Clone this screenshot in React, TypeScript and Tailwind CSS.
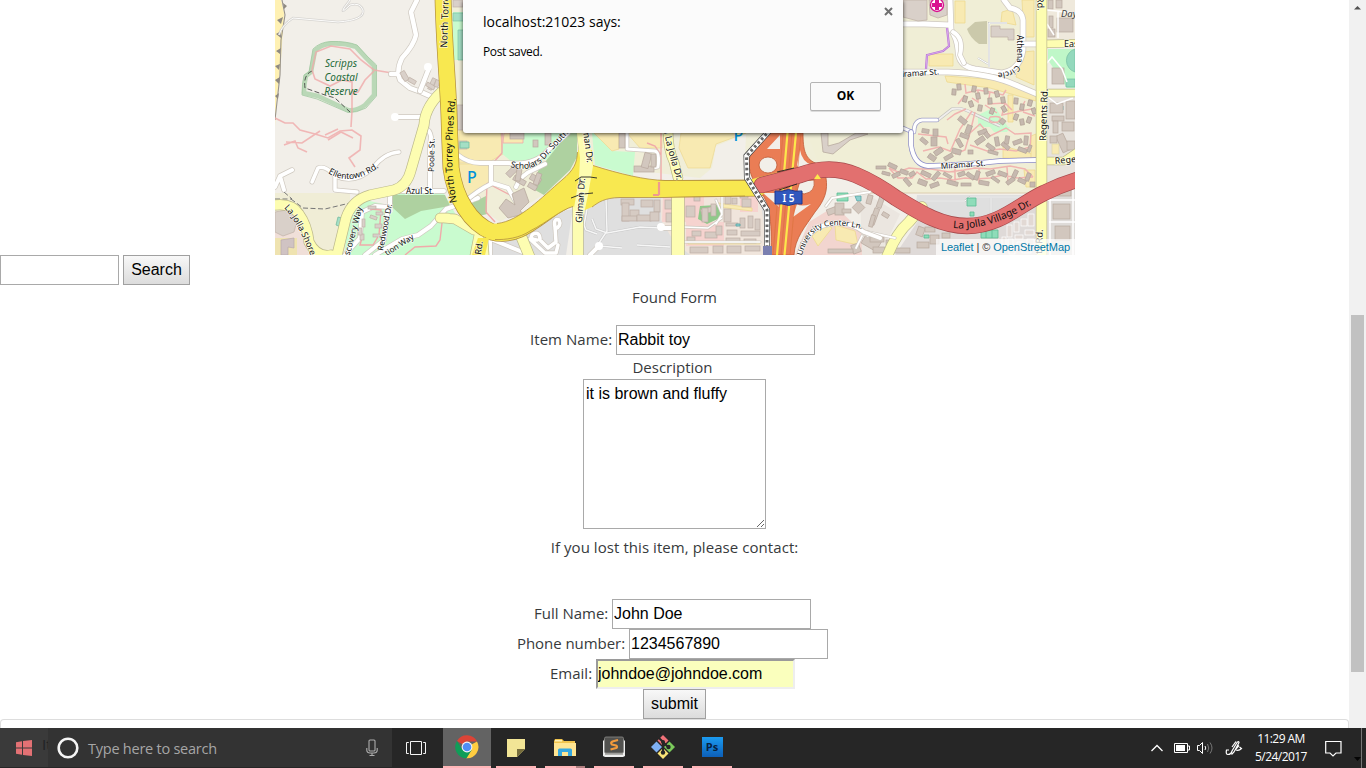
import React from "react";

type RoadProps = { d: string; w: number; fill?: string; edge?: string };

const Road = ({ d, w, fill = "#ffffff", edge = "#cfc9c0" }: RoadProps) => (
  <g fill="none" strokeLinecap="round" strokeLinejoin="round">
    <path d={d} stroke={edge} strokeWidth={w + 1.4} />
    <path d={d} stroke={fill} strokeWidth={w} />
  </g>
);

const PALE = "#fdfdb1";
const PALE_EDGE = "#bcb98d";

type Block = [number, number, number, number, number?];

const Blocks = ({ items, fill = "#d9d0c9", edge = "#c0b2a8" }: { items: Block[]; fill?: string; edge?: string }) => (
  <g fill={fill} stroke={edge} strokeWidth="0.7">
    {items.map(([x, y, w, h, r = 0], i) => (
      <rect key={i} x={x} y={y} width={w} height={h} transform={`rotate(${r} ${x + w / 2} ${y + h / 2})`} />
    ))}
  </g>
);

const housesNorth: Block[] = [
  [957, 84, 4, 6, -5], [952, 89, 4, 6, 5], [972, 86, 4, 6, 10], [984, 88, 4, 6, -5], [995, 91, 4, 6, -15],
  [963, 96, 4, 6, 15], [976, 93, 4, 6, -10], [988, 98, 4, 6, -5], [969, 101, 4, 6, -20], [978, 105, 4, 6, 10],
  [990, 108, 4, 6, 20], [1002, 106, 4, 6, -30], [1014, 98, 4, 6, 5], [1020, 104, 4, 6, 10], [1028, 100, 4, 6, 15],
  [1032, 108, 4, 6, -20], [1001, 97, 4, 6, -10], [1014, 114, 4, 6, 20], [1020, 119, 4, 6, -10], [1027, 117, 4, 6, 20],
  [1000, 119, 5, 5, 40],
];

const housesMid: Block[] = [
  [958, 118, 9, 5, 40], [966, 125, 5, 9, 20], [960, 134, 9, 4, 20], [955, 141, 9, 4, 60], [952, 149, 9, 5, 15],
  [944, 155, 9, 4, -30], [934, 149, 9, 5, -35], [928, 155, 8, 5, 35], [978, 130, 9, 4, -20], [975, 138, 10, 5, -35],
  [968, 150, 5, 4, 0], [986, 145, 9, 4, 35], [995, 137, 4, 9, -10], [1001, 144, 9, 4, 40], [1005, 136, 4, 8, 10],
  [1013, 140, 9, 4, -20], [1024, 136, 4, 9, 5], [1018, 148, 9, 4, 20], [988, 151, 10, 3, 15], [920, 139, 8, 4, 40],
  [931, 137, 6, 9, 0], [922, 129, 7, 4, 10], [933, 129, 5, 7, 0], [984, 133, 6, 4, 50], [1028, 145, 3, 7, 20],
];

const housesSouth: Block[] = [
  [876, 166, 10, 3], [888, 164, 9, 4, 25], [882, 172, 8, 3, 15], [892, 173, 8, 4, -25], [900, 170, 8, 4, 20],
  [903, 180, 9, 4, 50], [909, 172, 6, 4, -30], [918, 180, 9, 5, 20], [921, 172, 10, 4, 25], [934, 171, 4, 10, 40],
  [930, 183, 9, 4, -20], [943, 174, 9, 3, 30], [947, 181, 11, 4, 15], [958, 172, 7, 4, -20], [961, 183, 10, 3],
  [966, 174, 9, 4, 35], [975, 171, 4, 9, 20], [979, 181, 10, 4, 10], [986, 171, 9, 4, -20], [991, 178, 9, 3, 35],
  [998, 172, 9, 4, 20], [1006, 179, 9, 4, -35], [1013, 170, 4, 8, 25], [1018, 179, 8, 4, 25], [1026, 173, 4, 8, 20],
  [1030, 182, 5, 5],
];

const Label = ({ x, y, r = 0, size = 8.6, children }: { x: number; y: number; r?: number; size?: number; children: string }) => (
  <text x={x} y={y} transform={`rotate(${r} ${x} ${y})`} fontSize={size} fill="#111" stroke="#ffffff" strokeOpacity="0.65" strokeWidth="1.6" paintOrder="stroke">
    {children}
  </text>
);

const CurveLabel = ({ id, d, size = 8.6, halo = "#ffffff", length, children }: { id: string; d: string; size?: number; halo?: string; length?: number; children: string }) => (
  <>
    <path id={id} d={d} fill="none" />
    <text fontSize={size} fill="#111" stroke={halo} strokeOpacity="0.6" strokeWidth="1.4" paintOrder="stroke" textLength={length}>
      <textPath href={`#${id}`}>{children}</textPath>
    </text>
  </>
);

const StreetMap = () => (
  <svg width="800" height="255" viewBox="275 0 800 255" className="block" fontFamily='"Noto Sans", "Open Sans", sans-serif'>
    <rect x="275" y="0" width="800" height="255" fill="#f2efe9" />

    {/* land use */}
    <path d="M275 0H281L284 13L281 60L276 105L275 127Z" fill="#fff1b3" />
    <path d="M275 193H350V255H275Z" fill="#f0edd6" />
    <path d="M275 222H296L309 255H275Z" fill="#f0dfd8" />
    <path d="M450 0H465V133H870V170L700 178L590 165L500 222L455 190Z" fill="#f0eed8" />
    <path d="M275 238H297V255H275Z" fill="#efe3b0" />
    <path d="M453 12H464V60H453Z" fill="#c9fbcf" />
    <path d="M453 13H464V21H453ZM458 30H464V60H458Z" fill="#a4dfc5" stroke="#7cc4a5" strokeWidth="0.7" />
    <path d="M392 194L443 192L460 222L484 236L478 255H343L350 240L393 212Z" fill="#c9fbcf" />
    <path d="M348 203L365 200L388 205L385 240L360 252L345 252Z" fill="#c9fbcf" />
    <path d="M392 195H445L450 206L421 211L405 219L392 207Z" fill="#aed1a0" />
    <path d="M459 127H486L500 130L503 154L487 163H459Z" fill="#f8eab2" stroke="#eed990" strokeWidth="0.7" />
    <path d="M459 164H488L492 184L472 196L460 199L456 185Z" fill="#f8eab2" stroke="#eed990" strokeWidth="0.7" />
    <path d="M505 133H575L556 159L512 162L501 153Z" fill="#c9fbcf" />
    <path d="M504 133H523V143H503Z" fill="#f8eab2" stroke="#efa9a9" strokeWidth="0.8" />
    <path d="M568 133H577V157L570 170L551 188L544 195L535 190L538 171Z" fill="#aed1a0" />
    <path d="M466 206L486 196L487 214L476 217L466 208Z" fill="#aed1a0" />
    <path d="M592 133H600L611 151L635 152L633 176L595 165Z" fill="#c9fbcf" />
    <path d="M594 133H619V149L612 151Z" fill="#f8eab2" stroke="#eed990" strokeWidth="0.7" />
    <path d="M627 133H662V148H640Z" fill="#f8eab2" stroke="#eed990" strokeWidth="0.7" />
    <path d="M681 133H746L716 144L710 168H688L679 148Z" fill="#f8eab2" stroke="#eed990" strokeWidth="0.7" />
    <path d="M716 146L746 134L745 158L750 178H700L712 168Z" fill="#f2efe9" />
    <path d="M606 198H764V255H470L482 238L545 214L590 206Z" fill="#dfdfdf" />
    <path d="M573 208L579 208L576 255H566Z" fill="#f2efe9" />
    <path d="M661 197H760L765 232V255H690L673 240L661 220Z" fill="#f0e5dc" />
    <path d="M663 197H704V222H662ZM740 196H758V212H740ZM686 222H724V246H686Z" fill="#f6d3cf" />
    <path d="M700 206L717 205L722 217L707 224L698 219Z" fill="#8fc98a" />
    <path d="M807 133H903V0H1036V193H878L850 168L818 162Z" fill="#f0eed6" />
    <path d="M817 190L850 180L875 195L920 215L895 255H795Z" fill="#f2efe9" />
    <path d="M809 222L835 206L860 230L880 255H795Z" fill="#f2d5cf" />
    <path d="M860 190L900 214L880 255H862Z" fill="#ebe6e0" />
    <path d="M917 195H1036L990 225L950 224L915 211Z" fill="#dfdfdf" />
    <path d="M895 255L920 218L960 232L1005 225L1036 205V255Z" fill="#dfdad8" />
    <path d="M1047 0H1075V47H1047Z" fill="#efe9dc" />
    <path d="M1047 97H1075V178L1047 191Z" fill="#e7e2dc" />
    <path d="M1047 192L1075 184V255H1047Z" fill="#dedbd8" />
    <path d="M1048 49H1075V88H1067L1048 60Z" fill="#bff7c8" />
    <path d="M1075 49A12 12 0 0 0 1075 72ZM1066 79H1075V87H1066Z" fill="#94d9bd" stroke="#74bda0" strokeWidth="0.7" />
    <path d="M978 115L995 107L1008 127H978ZM990 127H1010L1007 132H994Z" fill="#c9fbcf" />

    {/* parking lots */}
    <g fill="#f8eab2" stroke="#eed990" strokeWidth="0.8">
      <path d="M955 1H965V23H955ZM929 54H953V66H929ZM1022 0H1034V37H1024ZM1023 52L1034 51V85L1016 77Z" />
      <path d="M945 76L1000 80L1036 96V101L990 88L947 82ZM1002 12L1012 9L1016 25L1001 22Z" />
      <path d="M1008 95H1013V122H1008ZM1003 146L1032 154L1036 158H1003ZM1024 170H1035V187H1026Z" />
      <path d="M1031 146V136L1036 134V158H1031ZM812 236L826 224L832 228L818 246ZM835 225L855 231L858 245L836 240Z" />
      <path d="M718 203L752 208V211L718 207ZM688 242H760V244H688Z" />
    </g>

    {/* coastline cliff */}
    <path d="M282 0L285 15L281 40L280 75L275 120" fill="none" stroke="#999389" strokeWidth="1.1" />
    <g fill="#8f8a82">
      <path d="M283 3L287 6L284 9ZM283 17L277 20L281 24ZM281 31L276 34L281 38ZM281 48L276 51L280 54ZM280 64L275 66L279 70ZM280 77L275 80L279 84ZM279 93L275 96L278 99Z" />
    </g>

    {/* reserve */}
    <path d="M311 72L315 51Q320 45 331 43.500Q345 43 356 47L366 58L374 66L374 95L365 105Q357 111 348 110L318 96L304 93Q304 84 306 76Z" fill="none" stroke="#b4d5b1" strokeWidth="4.500" strokeLinejoin="round" opacity="0.9" />
    <path d="M309 72L313 49Q320 42 331 41.500Q346 41 357 45L368 57L376.500 65L376.500 96L366 108Q356 113 348 112.500L317 99L302 95Q302 84 304 75Z" fill="none" stroke="#a0c8a0" strokeWidth="0.8" />
    <path d="M312 71Q303 75 305 88L325 95L335 98L350 112" fill="none" stroke="#333" strokeWidth="0.8" strokeDasharray="5 2.5" />
    <g fill="none" stroke="#f0aaaa" strokeWidth="1.6" opacity="0.8">
      <path d="M312 70L316 52L331 46L350 49L361 60L374 70L392 73M312 70L315 79L330 86L342 80L352 82V111L351 127" />
      <path d="M374 71L365 80L358 92L352 94M275 118L285 123H293L300 130L315 134L328 138L340 131L352 130L361 136L360 150L349 158L355 167" />
      <path d="M284 145L295 141L298 148L307 152M286 142L302 143L320 131M325 135L338 129M328 140L341 132L353 138" />
    </g>
    <g fill="none" stroke="#fff" strokeWidth="1" opacity="0.9">
      <path d="M279 35Q282 25 293 18L338 22Q365 20 363 10Q360 2 350 5Q340 15 344 8L350 0" stroke="#d4d2cf" strokeWidth="2.4" />
      <path d="M279 35Q282 25 293 18L338 22Q365 20 363 10Q360 2 350 5Q340 15 344 8L350 0" />
    </g>

    {/* left streets */}
    <Road d="M417 0L411 12L416 35Q414 45 402 58Q396 70 400 80L410 88L421 92L430 96M398 74H391" w={4.5} />
    <Road d="M420 91L429 68" w={4.5} />
    <circle cx="428" cy="67" r="4" fill="#fff" />
    <Road d="M395 117H420" w={4} />
    <circle cx="395" cy="117" r="4" fill="#fff" />
    <Road d="M312 182L318 168Q325 165 335 176Q355 185 373 168Q384 153 399 152M335 177V190L357 192" w={3.5} />
    <Road d="M275 187L280 176L292 170M280 176L284 190" w={4} />
    <Road d="M398 191H444M430 190V145L431 137Q430 130 425 128M390 193V206" w={4} />
    <path d="M275 199H292L284 192M291 199L303 208L325 209L350 203" fill="none" stroke="#777" strokeWidth="1" strokeDasharray="5 2.5" />
    <Road d="M345 255L360 238L362 212L375 206L388 207L384 240L365 255M375 255L402 239L418 235L431 226L446 209L478 198" w={4} />
    <path d="M370 209L381 210L379 235L373 245H360L362 238M442 223L440 240L436 246L415 247L405 255" fill="none" stroke="#f0aaaa" strokeWidth="1.4" />
    <Blocks items={[[368, 206, 8, 3], [376, 212, 7, 3], [375, 224, 7, 4], [373, 234, 7, 3], [362, 219, 3, 8], [360, 234, 4, 6], [370, 216, 7, 3, 20], [358, 228, 4, 7], [402, 71, 5, 10, -30], [408, 79, 8, 4, 30], [430, 78, 4, 12, 25], [426, 84, 9, 4, 30], [435, 80, 4, 7, 20], [453, 0, 10, 7], [457, 105, 7, 25], [459, 141, 8, 8]]} />
    <path d="M275 212L286 210L298 217L294 232L283 236L275 232Z" fill="#d9d0c9" stroke="#c0b2a8" strokeWidth="0.7" />
    <path d="M281 240L294 238L294 248L288 247V255H281Z" fill="#d0c3c3" stroke="#b9a9ad" strokeWidth="0.7" />
    <path d="M460 142H469V148H460ZM338 217L342 218L341 227L336 225Z" fill="#a4dfc5" stroke="#74bda0" strokeWidth="0.8" />
    <Road d="M275 205Q292 203 299 214Q307 225 309 242Q317 258 331 255M337 255L346 218Q352 200 370 195L394 190Q407 186 411 170L424 125Q425 105 446 88" w={9.5} fill={PALE} edge={PALE_EDGE} />

    {/* campus streets */}
    <g fill="none" stroke="#f0aaaa" strokeWidth="1.4">
      <path d="M502 133V153L492 164M487 183L486 212L495 222M487 183L510 195" />
      <path d="M661 133V180L657 194L651 195M647 143L655 146L661 155" />
    </g>
    <Road d="M458 155Q468 163 480 163H508Q535 166 548 150L568 133M491 165V184Q478 190 462 204M492 183L508 188L516 202M516 187Q520 175 535 169L545 164" w={4} />
    <Road d="M627 133V149L655 151Q660 153 658 167L648 169" w={3} />
    <Blocks items={[[506, 168, 13, 6, -45], [513, 178, 13, 5, 30], [516, 169, 5, 12, 10], [530, 176, 11, 6, 30], [535, 173, 5, 12, 20], [528, 184, 9, 5, 30], [545, 133, 6, 12], [533, 140, 5, 7], [510, 133, 14, 6], [619, 133, 6, 15], [634, 166, 20, 6], [643, 153, 7, 15, 15], [651, 154, 5, 13]]} fill="#d2c7be" edge="#b8a99e" />
    <path d="M512 194L524 188L529 202L520 211L524 214L508 218L499 208L506 199L515 205Z" fill="#d2c7be" stroke="#b8a99e" strokeWidth="0.8" />
    <g fill="none" stroke="#c8c8c8" strokeWidth="2.6">
      <path d="M592 219L596 229L607 233L640 227L660 228M606 199L607 231L599 243M637 245L670 247M587 209L584 225L586 230L597 234M599 246L622 248" />
    </g>
    <g fill="none" stroke="#f6f6f6" strokeWidth="1.5">
      <path d="M592 219L596 229L607 233L640 227L660 228M606 199L607 231L599 243M637 245L670 247M587 209L584 225L586 230L597 234M599 246L622 248" />
    </g>
    <Road d="M537 240Q528 239 533 234Q540 231 540 240L548 248L556 242L555 227Q553 218 559 220Q562 226 555 229M530 239L545 253H556L558 245" w={3.5} />
    <Road d="M490 239L490 255M493 240L530 255M599 246L590 255M660 228H680" w={4} />
    <circle cx="599" cy="246" r="4" fill="#fff" />
    <circle cx="661" cy="227" r="4" fill="#fff" />
    <Blocks items={[[621, 199, 13, 6], [622, 203, 7, 18], [630, 210, 9, 7], [622, 216, 15, 5], [641, 200, 12, 7], [654, 200, 6, 12], [637, 215, 14, 6], [650, 212, 9, 9], [665, 200, 7, 9], [666, 213, 6, 9], [686, 206, 9, 11], [694, 195, 6, 6], [701, 208, 12, 5, -15], [702, 208, 6, 14], [711, 204, 5, 12], [724, 209, 7, 13], [725, 195, 6, 9], [732, 198, 5, 6], [742, 199, 9, 8], [740, 194, 8, 4], [726, 223, 12, 3], [727, 230, 10, 5], [740, 218, 5, 10], [748, 216, 5, 12], [755, 219, 5, 11], [741, 231, 19, 5], [726, 238, 14, 4], [744, 239, 12, 4], [705, 232, 12, 6], [716, 226, 6, 9], [692, 231, 9, 5], [687, 237, 8, 4], [690, 247, 18, 6], [713, 246, 10, 7], [727, 246, 14, 7], [745, 246, 15, 5]]} fill="#d6cbc3" edge="#bcada3" />
    <Road d="M684 227L708 228L722 218M684 242H760M716 200L722 214L716 224M722 196V215" w={1.5} />

    {/* right-hand residential */}
    <Road d="M903 24H925L950 25M950 0L951 30Q957 38 958 50Q958 66 975 69L1002 73Q1020 70 1023 50V20Q1022 10 1010 8L1004 0" w={5} />
    <Road d="M953 32Q964 38 960 55L964 63" w={4} />
    <Road d="M903 72H948Q990 73 1018 86L1037 94M1020 44H1037" w={5} />
    <path d="M947 28L949 46L943 51L927 55L926 69" fill="none" stroke="#b873d8" strokeWidth="2.2" />
    <path d="M947 28L949 46L943 51L927 55L926 69" fill="none" stroke="#e0b4ef" strokeWidth="0.8" />
    <path d="M967 29L975 22L987 21V44H979Q970 38 967 29Z" fill="#cbc9ab" />
    <path d="M989 67V23H1007M978 58L988 64" fill="none" stroke="#c8c8c8" strokeWidth="2" />
    <path d="M989 67V23H1007M978 58L988 64" fill="none" stroke="#fff" strokeWidth="1" />
    <path d="M991 26H1000V29H1014V40H1008V37H991Z" fill="#d9d0c9" stroke="#c0b2a8" strokeWidth="0.8" />
    <path d="M903 0H927V20L918 21L903 17ZM929 0H947V15L938 18L930 15Z" fill="#d9d0c9" stroke="#c0b2a8" strokeWidth="0.8" />
    <path d="M914 132Q914 121 922 120H938L952 109Q962 107 972 113L1000 126" fill="none" stroke="#c4c2be" strokeWidth="3.200" />
    <path d="M914 132Q914 121 922 120H938L952 109Q962 107 972 113L1000 126" fill="none" stroke="#f0eeec" strokeWidth="1.800" />
    <g fill="none" stroke="#f0b4b0" strokeWidth="1.500">
      <path d="M965 84L966 93L978 90L990 92L1003 95L1006 90M958 104L965 95M978 90V102L972 98M990 92L988 104L1005 103L1012 110M985 105L997 113M1005 103L1002 115L1020 111L1032 109M1020 111L1025 101M1035 116L1023 112M990 117Q1005 115 998 122Q987 124 990 117M966 109L955 114L947 120" />
      <path d="M975 112L970 133L965 150L955 154M970 133L980 124L990 136L1006 128L1015 134L1031 133L1030 147L1016 151L1000 149L987 151L970 145M950 152L960 129L972 111M923 151L939 147L950 151M918 134L946 137L948 144" />
      <path d="M889 168L898 172L909 168L920 169M889 168L898 178L912 178L917 172L926 179L940 178L953 180L965 178L976 179L990 178L1003 175L1017 178L1033 177M920 169L931 169L949 172L964 170L975 168L990 169L1010 166L1025 169L1033 177M955 167V185M979 169V183M1007 167L1008 182" />
    </g>
    <Blocks items={housesNorth} fill="#c6b9af" edge="#ad9d92" />
    <Blocks items={housesMid} fill="#c6b9af" edge="#b3a399" />
    <Blocks items={housesSouth} fill="#c6b9af" edge="#b3a399" />
    <path d="M821 133L823 152L833 154L850 140L868 134L856 133L839 143L828 146V133Z" fill="#d9d0c9" stroke="#b8a99e" strokeWidth="0.8" />
    <Road d="M914 132Q914 121 922 120H937M903 128L912 132" w={3} edge="#9f9fc7" />
    <Road d="M911 132V145Q914 165 928 166Q965 165 1000 161L1036 160" w={4} edge="#8c8cc8" />
    <path d="M870 193H1036" stroke="#d9c8a9" strokeWidth="0.9" />
    <path d="M921 201L965 201L970 197H1032M991 198V215" fill="none" stroke="#c8c8c8" strokeWidth="2.2" />
    <path d="M921 201L965 201L970 197H1032M991 198V215" fill="none" stroke="#fff" strokeWidth="1" />
    <path d="M967 198H976V206H967ZM981 230H998V238H981ZM986 230V238M992 230V238M970 212H974V216H970ZM924 235H929V238H924ZM837 193H848V201H837Z" fill="#8edcb9" stroke="#5aba92" strokeWidth="0.8" />
    <path d="M855 196H861V201H857ZM736 224H740V226H736ZM1058 206H1064V208H1058ZM1058 230H1064V232H1058ZM1060 106H1063V110H1060Z" fill="#90d0cf" stroke="#55a5a4" strokeWidth="0.8" />

    {/* lower right buildings */}
    <Blocks items={[[827, 208, 10, 6, -20], [835, 203, 9, 12], [842, 209, 9, 4], [854, 203, 9, 9, 45], [867, 195, 5, 9, 15], [872, 208, 5, 17, 20], [878, 196, 5, 12, 20], [852, 244, 8, 9, -20], [863, 236, 17, 12, 30], [828, 249, 25, 4], [870, 215, 4, 12, 15], [882, 213, 7, 4, 30], [870, 237, 14, 5], [886, 240, 10, 6], [873, 247, 12, 6], [892, 248, 18, 5], [917, 227, 7, 9, 20], [925, 227, 10, 5], [930, 235, 9, 9], [917, 242, 12, 6], [942, 233, 8, 5]]} fill="#d2c7be" edge="#b8a99e" />
    <Blocks items={[[1007, 225, 5, 12], [1014, 222, 5, 10], [1021, 219, 6, 7], [1028, 214, 6, 12], [1008, 239, 5, 8], [1015, 235, 8, 4], [1025, 230, 9, 5], [1017, 242, 6, 6], [1027, 239, 7, 6], [1002, 237, 4, 10], [1009, 250, 6, 4], [1022, 249, 9, 4]]} fill="#e2d9d4" edge="#ffffff" />
    <Blocks items={[[1048, 0, 5, 9], [1056, 0, 6, 8], [1049, 16, 4, 12], [1057, 18, 16, 14], [1048, 29, 7, 8], [1052, 68, 12, 16], [1050, 103, 13, 10], [1066, 101, 9, 18], [1052, 116, 12, 5], [1053, 121, 5, 12], [1062, 122, 12, 9], [1059, 134, 8, 18, -25], [1050, 136, 7, 7], [1067, 141, 8, 9], [1053, 204, 17, 15], [1055, 226, 15, 14], [1051, 188, 20, 8]]} fill="#d2c7be" edge="#b8a99e" />
    <Blocks items={[[1052, 144, 7, 10]]} fill="#f8eab2" edge="#dcd7a8" />
    <path d="M1047 63L1052 57L1062 69L1067 82M1047 24L1054 35M1047 200H1075M1049 222H1075M1048 97L1057 104L1073 98M1073 184V255M1050 185V255M1058 11V38M1047 10L1075 13" fill="none" stroke="#fff" strokeWidth="1.5" />

    {/* minor yellow roads */}
    <Road d="M582 130L586 165M584 178L578 206V257M482 232L484 260M519 231L530 258" w={10} fill={PALE} edge={PALE_EDGE} />
    <Road d="M480 230L474 260M444 218L455 219L474 230M440 218H448M668 130Q668 150 674 162L678 178" w={9} fill={PALE} edge={PALE_EDGE} />
    <Road d="M678 194V260" w={12} fill={PALE} edge={PALE_EDGE} />
    <Road d="M885 262Q895 234 909 222L922 207" w={10} fill={PALE} edge={PALE_EDGE} />
    <Road d="M1041 44L1080 43M1041 93H1080M1041 161L1064 161L1080 150" w={7} fill={PALE} edge={PALE_EDGE} />
    <Road d="M1041.500 -5V262" w={10} fill={PALE} edge={PALE_EDGE} />

    {/* North Torrey Pines / La Jolla Village */}
    <Road d="M443 -5C444 50 449 90 449.500 132L451 168C455 198 470 223 492 232C515 238 532 222 552 208C565 200 576 193 592 189L760 188" w={15.500} fill="#f8e850" edge="#b3903d" />
    <path d="M478 238L472 255H485L489 238Z" fill="#f8e850" />
    <path d="M497 223.500C520 221 542 197 562 180C574 170 577 163 577.500 152L583 160L593 165.500C620 174 645 180 665 180.500H757L762 195L665 197H620C604 198 599 202 592 207L578 213L573 206C560 211 548 222 530 231C520 238 505 240 495 239.500L480 233L490 224Z" fill="#f8e850" />
    <path d="M497 223.500C520 221 542 197 562 180C574 170 577 163 577.500 152M593 165.500C620 174 645 180 665 180.500H745M592 207C599 202 604 198 620 197.500H665L745 196M573 206.500C560 210 548 222 530 231C520 238 505 240 495 239.500" fill="none" stroke="#b3903d" strokeWidth="0.8" />
    <path d="M578 150L592 150L593 166L590 178H581L577 181L579 168Z" fill="#f8e850" />
    <path d="M577 133H588L593 166L591 178L588 195L584 214H573L579 178L580 158Z" fill={PALE} />
    <path d="M575 181L581 177H590L597 178M571 198L579 195L583 194L593 193M580 178L579 186" fill="none" stroke="#222" strokeWidth="0.9" />
    <path d="M659 182V195M653 195H659" stroke="#ef9a8f" strokeWidth="2.2" fill="none" />

    {/* interstate and ramps */}
    <path d="M769 133C760 142 751 150 749 160C748 170 753 180 758 190C770 200 772 220 771 255H794C795 238 805 227 815 212C825 200 828 190 826 178L818 164C805 160 803 150 803 133Z" fill="#ea7d55" stroke="#c05a35" strokeWidth="0.8" />
    <path d="M780 135V149L767 149ZM793 217L811 204Q801 207 797 204Z" fill="#f2efe9" />
    <path d="M800 150Q802 162 812 165L799 169L797 165Z" fill="#f2efe9" />
    <ellipse cx="768" cy="165" rx="9" ry="8" fill="#f2efe9" stroke="#c05a35" strokeWidth="0.8" />
    <path d="M800 181L814 180Q816 192 804 194L797 191Z" fill="#f2efe9" stroke="#c05a35" strokeWidth="0.8" />
    <path d="M763 193L775 193L779 207Z" fill="#f2efe9" />
    <path d="M787.500 133L777 255M796 133L784.500 255" stroke="#fce84b" strokeWidth="2.2" />
    <path d="M783 133L773 255M792 133L781 255M801 133L790 255" stroke="#d97039" strokeWidth="0.6" />
    <path d="M749 180L778 172L790 176L762 195H750Z" fill="#f8e850" />
    <Road d="M762 185L800 175Q830 164 856 175Q875 183 896 198C922 214 942 226 967 226C1000 226 1020 204 1044 193Q1062 184 1080 179" w={15} fill="#e2706f" edge="#a84a4c" />
    <path d="M777 172L794 168M779 190L797 184" stroke="#222" strokeWidth="0.9" />
    <path d="M814 179L817.500 174L821 179Z" fill="#fce84b" />
    <path d="M770 130L746.500 156L747 178L767 210V247" fill="none" stroke="#444" strokeWidth="6" />
    <path d="M770 130L746.500 156L747 178L767 210V247" fill="none" stroke="#fff" strokeWidth="4.6" />
    <path d="M770 130L746.500 156L747 178L767 210V247" fill="none" stroke="#666" strokeWidth="3" strokeDasharray="2.6 2.6" />
    <rect x="763" y="246" width="9" height="9" fill="#7a7fb0" />
    <path d="M775 191Q782 192 788.500 189.500Q795 192 802 191V204Q795 203 788.500 205.500Q782 203 775 204Z" fill="#3158bd" stroke="#1b3690" strokeWidth="1" />
    <text x="788.500" y="201.500" textAnchor="middle" fontSize="10" fontWeight="600" fill="#fff">I 5</text>

    <Road d="M826 206L832 198L870 192M858 228L868 236M868 232L895 238M862 236L856 248" w={1.8} />
    <Road d="M797 262Q804 232 822 226Q845 218 864 232L880 238" w={4} />

    {/* labels */}
    <g fontStyle="italic" fill="#1f6b3a" fontSize="10" textAnchor="middle">
      <text x="341" y="67">Scripps</text>
      <text x="341" y="81">Coastal</text>
      <text x="341" y="94.500">Reserve</text>
    </g>
    <Label x={447} y={48} r={-88} size={9.5}>North Torrey Pines Rd.</Label>
    <CurveLabel id="torrey" d="M457 202Q447 160 458 80" size={9.9} halo="#f8e850">North Torrey Pines Rd.</CurveLabel>
    <Label x={434} y={172} r={-89} size={8.2}>Poole St.</Label>
    <Label x={406} y={194} size={8.2}>Azul St.</Label>
    <CurveLabel id="ellentown" d="M328 173Q352 189 385 163" size={8.6}>Ellentown Rd.</CurveLabel>
    <CurveLabel id="shores" d="M284 208Q298 222 313 262" size={8.8}>La Jolla Shores Dr.</CurveLabel>
    <Label x={349} y={258} r={-75} size={8.6}>iscovery Way</Label>
    <Label x={383} y={251} r={-79} size={8}>Redwood Dr.</Label>
    <Label x={387} y={256} r={-33} size={8}>tion Way</Label>
    <CurveLabel id="scholars" d="M510 167Q534 174 548 155L572 129" size={8.6}>Scholars Dr. South</CurveLabel>
    <Label x={583} y={130} r={83} size={9.2}>man Dr.</Label>
    <Label x={582} y={223} r={-86} size={9.2}>Gilman Dr.</Label>
    <CurveLabel id="lajolla" d="M663 127Q668 155 682 196" size={9.4}>la La Jolla Dr.</CurveLabel>
    <Label x={481} y={255} r={-82} size={9}>Rd.</Label>
    <CurveLabel id="center" d="M802 256Q808 232 824 227Q840 222 872 232" size={7.8}>University Center Ln.</CurveLabel>
    <Label x={902} y={77} r={-4} size={8.2}>iramar St.</Label>
    <Label x={941} y={169} r={-4} size={8.2}>Miramar St.</Label>
    <CurveLabel id="athena" d="M1017 35V60Q1017 74 990 73" size={8.2}>Athena Circle</CurveLabel>
    <Label x={1037} y={-3} r={87} size={9.2}>Rd.</Label>
    <Label x={1046} y={141} r={-88} size={9.4}>Regents Rd.</Label>
    <Label x={1042} y={254} r={-88} size={9.4}>ts Rd.</Label>
    <Label x={1064} y={47} size={9}>Eastgate</Label>
    <Label x={1055} y={164} r={-5} size={9}>Regents</Label>
    <text x="1061" y="17" fontSize="9.500" fontStyle="italic" fill="#444">Day</text>
    <CurveLabel id="village" d="M953 228Q992 232 1042 198" size={10.2} halo="#e2706f">La Jolla Village Dr.</CurveLabel>
    <g fill="#0092da" fontSize="16" fontWeight="500">
      <text x="467" y="183">P</text>
      <text x="733.500" y="141">P</text>
    </g>
    <circle cx="937" cy="5" r="6.500" fill="#fff" stroke="#d9118f" strokeWidth="1.4" />
    <path d="M935 0H939V3H942V7H939V10H935V7H932V3H935Z" fill="#d9118f" />
  </svg>
);

const body = "font-['Open_Sans','Noto_Sans',sans-serif]";
const fieldClass =
  "h-[30px] w-[199px] border border-[#a9a9a9] bg-white px-px py-0 font-['Liberation_Sans',Arial,sans-serif] text-[16px] text-black outline-none";
const buttonClass =
  "h-[30px] border border-[#a0a0a0] bg-linear-to-b from-[#f8f8f8] to-[#dcdcdc] font-['Liberation_Sans',Arial,sans-serif] text-[16px] leading-[28px] text-black";

const Dialog = () => (
  <div className="absolute left-[463px] top-0 flex h-[133px] w-[440px] flex-col rounded-b-[3px] bg-[#fbfbfb] pl-5 pr-[22px] pt-3 text-black shadow-[0_1px_4px_rgba(0,0,0,0.7)]">
    <svg className="absolute right-[10px] top-[7px]" width="9" height="9" viewBox="0 0 9 9">
      <path d="M1 1L8 8M8 1L1 8" stroke="#707070" strokeWidth="2" />
    </svg>
    <div className="h-5 text-[14px] leading-5">localhost:21023 says:</div>
    <div className="mt-[11px] h-[18px] text-[12px] leading-[18px] tracking-[-0.36px]">Post saved.</div>
    <button className="mt-[21px] h-[29px] w-[71px] self-end rounded-[2px] border border-[#b4b4b4] bg-[#fafafa] text-[12px] font-bold leading-[25px] shadow-[0_1px_0_rgba(0,0,0,0.12)]">
      <span className="block h-[27px] leading-[25px]">OK</span>
    </button>
  </div>
);

const Field = ({ label, labelClass, inputClass = fieldClass, value }: { label: string; labelClass: string; inputClass?: string; value: string }) => (
  <label className="mr-1 flex h-[30px] items-center justify-center gap-1">
    <span className={`${labelClass} pb-[2px]`}>{label}</span>
    <input className={inputClass} defaultValue={value} />
  </label>
);

const Page = () => (
  <main className="flex w-[1349px] flex-col overflow-hidden">
    <div className="relative ml-[275px] h-[255px] w-[800px] shrink-0">
      <StreetMap />
      <div className="absolute bottom-0 right-0 h-4 whitespace-nowrap bg-white/70 px-[5px] font-['Liberation_Sans',Arial,sans-serif] text-[11px] leading-4 tracking-[-0.07px] text-[#333]">
        <span className="text-[#0078a8]">Leaflet</span> | © <span className="text-[#0078a8]">OpenStreetMap</span>
      </div>
    </div>
    <div className="flex shrink-0 gap-1">
      <input className="h-[30px] w-[119px] border border-[#a9a9a9]" />
      <button className={`${buttonClass} w-[67px]`}>Search</button>
    </div>
    <form className="flex shrink-0 flex-col text-[15px] text-[#373a3c]">
      <p className="h-10 text-center leading-[25px]">Found Form</p>
      <Field label="Item Name:" labelClass="w-[82px] whitespace-nowrap tracking-[0.05px]" value="Rabbit toy" />
      <div className="h-6 pr-1 text-center leading-[24px]">Description</div>
      <textarea
        className="h-[150px] w-[183px] resize self-center border border-[#a9a9a9] px-[2px] py-[2px] font-['Liberation_Sans',Arial,sans-serif] text-[16px] leading-6 text-black outline-none"
        defaultValue="it is brown and fluffy"
      />
      <p className="h-[70px] text-center leading-[37px] tracking-[0.06px]">If you lost this item, please contact:</p>
      <Field label="Full Name:" labelClass="w-[74px] whitespace-nowrap" value="John Doe" />
      <Field label="Phone number:" labelClass="w-[108px] whitespace-nowrap tracking-[-0.05px]" value="1234567890" />
      <Field
        label="Email:"
        labelClass="w-[42px] whitespace-nowrap"
        value="johndoe@johndoe.com"
        inputClass="h-[30px] w-[199px] border-2 border-b-[#eeeeee] border-l-[#9a9a9a] border-r-[#eeeeee] border-t-[#9a9a9a] bg-[#faffbd] font-['Liberation_Sans',Arial,sans-serif] text-[16px] tracking-[-0.03px] text-black outline-none"
      />
      <button type="button" className={`${buttonClass} w-[63px] self-center`}>submit</button>
    </form>
    <div className="h-5 shrink-0 rounded-t-[4px] border border-b-0 border-[#dddddd]" />
  </main>
);

const Scrollbar = () => (
  <div className="flex w-[17px] flex-col items-center bg-[#f1f1f1] pt-[5px]">
    <svg width="7" height="5" viewBox="0 0 7 5"><path d="M0 4.500L3.500 1L7 4.500Z" fill="#505050" /></svg>
    <div className="mt-[305px] h-[357px] w-[13px] bg-[#c1c1c1]" />
  </div>
);

const ChromeIcon = () => (
  <svg width="24" height="24" viewBox="0 0 24 24">
    <path d="M12 12L2 6A11.300 11.300 0 0 1 22 6.500H12Z" fill="#db4437" />
    <path d="M12 12L22 6.500A11.300 11.300 0 0 1 11 23.200L16.500 15Z" fill="#ffcd40" />
    <path d="M2 6A11.300 11.300 0 0 0 11.500 23.300L16.500 15L12 12L7 14Z" fill="#0f9d58" />
    <circle cx="12" cy="12" r="5.400" fill="#f4f4f4" />
    <circle cx="12" cy="12" r="4.300" fill="#4f8df5" />
  </svg>
);

const NoteIcon = () => (
  <svg className="mt-[2px]" width="18" height="18" viewBox="0 0 18 18">
    <path d="M0 0H18V10L10 18H0Z" fill="#f2e596" />
    <path d="M10 10H18L10 18Z" fill="#766d3c" />
  </svg>
);

const FolderIcon = () => (
  <svg className="mt-[2px]" width="22" height="20" viewBox="0 0 22 20">
    <path d="M0 3L1 1H8L10 3H21V18H0Z" fill="#f0c44e" />
    <path d="M1 2H8V3.500H1Z" fill="#fff1b5" />
    <path d="M0 5H22V18H0Z" fill="#ffe592" />
    <path d="M4 18V12Q4 10.500 5.500 10.500H16.500Q18 10.500 18 12V18H14V14H8V18Z" fill="#36a8e0" />
  </svg>
);

const SublimeIcon = () => (
  <svg width="24" height="22" viewBox="0 0 24 22">
    <path d="M1 5L3 3V17H21V3L23 5V20L21 21H3L1 20Z" fill="#eeeeee" />
    <rect x="2.500" y="1" width="19" height="16" rx="1.500" fill="#51514f" stroke="#8a8a88" strokeWidth="0.800" />
    <path d="M3 18H21" stroke="#77756f" strokeWidth="1" />
    <path d="M16 4L10.500 5.500Q8 7 10 8.500L14 9.500Q16 11 14 12L8.500 13.500" fill="none" stroke="#f49a3c" strokeWidth="2.200" />
  </svg>
);

const GitIcon = () => (
  <svg width="24" height="24" viewBox="0 0 24 24">
    <path d="M12 0L17.500 5.500L12 11L6.500 5.500Z" fill="#f07178" />
    <path d="M5.500 6.500L11 12L5.500 17.500L0 12Z" fill="#7fb0f5" />
    <path d="M18.500 6.500L24 12L18.500 17.500L13 12Z" fill="#7bcb5b" />
    <path d="M12 13L17.500 18.500L12 24L6.500 18.500Z" fill="#fbe477" />
    <path d="M8 3L12 7V18M12 7L17 12" fill="none" stroke="#262626" strokeWidth="2" />
    <circle cx="12" cy="7" r="2" fill="#262626" /><circle cx="12" cy="17.500" r="2.200" fill="#262626" /><circle cx="17.500" cy="12" r="2.200" fill="#262626" />
  </svg>
);

const Tile = ({ children, active = false, stacked = false }: { children: React.ReactNode; active?: boolean; stacked?: boolean }) => (
  <div className={active ? "flex h-10 w-12 flex-col justify-between bg-[#636363]" : "flex h-10 w-10 flex-col justify-between"}>
    <div className="flex h-[38px] items-center justify-center">{children}</div>
    <div className="flex h-[2px] w-full justify-end bg-[#ffb5b7]">
      {stacked && <div className="h-full w-[9px] bg-[#b07f80]" />}
    </div>
  </div>
);

const Taskbar = () => (
  <footer className="flex h-10 w-full bg-[#262626]">
    <div className="flex h-[39px] w-12 items-center justify-between overflow-hidden bg-[#3a3a3a] pl-4">
      <svg width="16" height="16" viewBox="0 0 16 16" fill="#e37174">
        <path d="M0 2.300L6 1.300V7.500H0ZM7 1.100L16 0V7.500H7ZM0 8.500H6V14.700L0 13.700ZM7 8.500H16V16L7 14.900Z" />
      </svg>
      <span className="h-7 w-[6px] overflow-hidden text-[15px] leading-5 text-[#202124]">It</span>
    </div>
    <div className="flex h-[39px] w-[344px] items-center bg-[#333333] pl-[9px] pr-[14px]">
      <svg width="22" height="22" viewBox="0 0 22 22"><circle cx="11" cy="11" r="9.300" fill="none" stroke="#f5f5f5" strokeWidth="2.600" /></svg>
      <span className="ml-[9px] flex-1 pt-[2px] text-[14.500px] leading-5 tracking-[-0.24px] text-[#a6a6a6]">Type here to search</span>
      <svg width="12" height="18" viewBox="0 0 12 18" fill="none" stroke="#adadad" strokeWidth="1.100">
        <rect x="3" y="1" width="6" height="11" rx="1" /><path d="M0.800 9V11.500Q1 14 4 14H8Q11 14 11.200 11.500V9M6 14V16.500M3.500 16.500H8.500" />
      </svg>
    </div>
    <div className="flex w-[51px] items-center justify-center pr-[3px]">
      <svg width="20" height="14" viewBox="0 0 20 14" fill="none" stroke="#f5f5f5" strokeWidth="1">
        <path d="M4.500 0.500H15.500V13.500H4.500ZM2.800 1.500H0.500V12.500H2.800M17.200 1.500H19.500V12.500H17.200" />
      </svg>
    </div>
    <div className="flex gap-[9px]">
      <div className="-mr-1"><Tile active><ChromeIcon /></Tile></div>
      <Tile><NoteIcon /></Tile>
      <Tile stacked><FolderIcon /></Tile>
      <Tile><SublimeIcon /></Tile>
      <Tile><GitIcon /></Tile>
      <Tile>
        <div className="flex h-5 w-[21px] items-center justify-center bg-linear-to-b from-[#1c9bf0] to-[#0d5fb8] text-[11px] font-bold leading-5 text-[#06213f]">Ps</div>
      </Tile>
    </div>
    <div className="ml-auto flex items-center text-white">
      <svg width="12" height="8" viewBox="0 0 12 8" fill="none" stroke="#fff" strokeWidth="1.300"><path d="M0.500 7L6 1.500L11.500 7" /></svg>
      <svg className="ml-[11px]" width="16" height="10" viewBox="0 0 16 10"><path d="M0.500 0.500H13.500V9.500H0.500ZM14 3H15.500V7H14" fill="none" stroke="#fff" /><rect x="2" y="2" width="9" height="6" fill="#fff" /></svg>
      <svg className="ml-[7px]" width="18" height="14" viewBox="0 0 18 14" fill="none" stroke="#fff">
        <path d="M0.500 4.500H2.500L5.500 1.500V12.500L2.500 9.500H0.500Z" /><path d="M8 5Q9.500 7 8 9" /><path d="M10.500 3Q13 7 10.500 11M13 1.500Q17 7 13 12.500" stroke="#777" />
      </svg>
      <svg className="ml-[10px]" width="18" height="16" viewBox="0 0 18 16" fill="none" stroke="#fff" strokeWidth="1.200">
        <path d="M4 10H1.500Q0.500 14.500 3 14.500Q6 14.500 7 11L12 2.500Q14 0.500 14 2.500L9 12L6.500 14.500M7 7L11 1.500M10 10L14 5.500M11 10Q14 11 16.500 8.500L14.500 7" />
      </svg>
      <div className="ml-[11px] flex w-[54px] flex-col items-center whitespace-nowrap text-[12px] leading-[18px] tracking-[-0.550px]">
        <span>11:29 AM</span>
        <span>5/24/2017</span>
      </div>
      <svg className="ml-[17px]" width="17" height="17" viewBox="0 0 17 17" fill="none" stroke="#fff" strokeWidth="1.200"><path d="M0.700 1.500H16V13H11L8 16L5 13H0.700Z" /></svg>
      <div className="ml-[12px] flex h-10 w-[7px] items-end pb-[7px]">
        <svg width="7" height="4" viewBox="0 0 7 4"><path d="M0 0H7L3.500 4Z" fill="#050505" /></svg>
      </div>
      <div className="h-10 w-[5px] border-l border-[#777777]" />
    </div>
  </footer>
);

export default function App() {
  return (
    <div className={`${body} relative flex h-[768px] w-[1366px] flex-col overflow-hidden bg-white`}>
      <div className="flex h-[728px] overflow-hidden">
        <Page />
        <Scrollbar />
      </div>
      <Taskbar />
      <Dialog />
    </div>
  );
}
